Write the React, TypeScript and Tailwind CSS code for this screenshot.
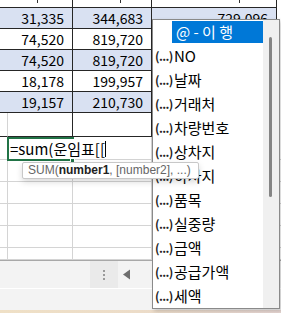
const ink = 'border-[#262626]'

const tableRows = [
  { a: '31,335', b: '344,683', c: '729,096', shaded: true },
  { a: '74,520', b: '819,720', c: '', shaded: false },
  { a: '74,520', b: '819,720', c: '', shaded: true },
  { a: '18,178', b: '199,957', c: '', shaded: false },
  { a: '19,157', b: '210,730', c: '', shaded: true },
]

const fields = ['NO', '날짜', '거래처', '차량번호', '상차지', '하차지', '품목', '실중량', '금액', '공급가액', '세액']

function TableRow({ a, b, c, shaded }: { a: string; b: string; c: string; shaded: boolean }) {
  const bg = shaded ? 'bg-[#d9e1f2]' : 'bg-white'
  return (
    <div className="grid grid-cols-[73px_79px_125px_4px] h-[21px] text-[14px] leading-[20px] text-black">
      <div className={`${bg} border-b border-r ${ink} text-right pr-[8px]`}>{a}</div>
      <div className={`${bg} border-b border-r ${ink} text-right pr-[8px]`}>{b}</div>
      <div className={`${bg} border-b border-r ${ink} text-right pr-[8px]`}>{c}</div>
      <div className="bg-white" />
    </div>
  )
}

function GridRow({ h }: { h: string }) {
  return (
    <div className={`grid grid-cols-[8px_65px_79px_125px_4px] ${h}`}>
      <div className="border-b border-r border-[#d4d4d4]" />
      <div className="border-b border-r border-[#d4d4d4]" />
      <div className="border-b border-r border-[#d4d4d4]" />
      <div className="border-b border-r border-[#d4d4d4]" />
      <div className="border-b border-[#d4d4d4]" />
    </div>
  )
}

function Tick({ mr }: { mr: string }) {
  return (
    <div className="flex justify-end items-start">
      <div className={`w-[1px] h-[3px] bg-[#333] ${mr}`} />
    </div>
  )
}

export default function App() {
  return (
    <div className="relative w-[281px] h-[313px] overflow-hidden bg-white font-['Noto_Sans_CJK_KR',sans-serif]">
      {/* sheet */}
      <div className="flex flex-col h-[260px]">
        <div className="grid grid-cols-[73px_79px_125px_4px] h-[8px]">
          <div className={`border-b border-r ${ink}`}><Tick mr="mr-[34px]" /></div>
          <div className={`border-b border-r ${ink}`}><Tick mr="mr-[30px]" /></div>
          <div className={`border-b border-r ${ink}`}><Tick mr="mr-[36px]" /></div>
          <div />
        </div>
        {tableRows.map((r, i) => (
          <TableRow key={i} {...r} />
        ))}
        <div className="grid grid-cols-[8px_65px_79px_125px_4px] h-[24px]">
          <div className={`border-b ${ink} border-r-[#d4d4d4] border-r`} />
          <div className={`border-b border-r ${ink}`} />
          <div className={`border-b border-r ${ink}`} />
          <div className={`border-b border-r ${ink}`} />
          <div />
        </div>
        {/* formula row */}
        <div className="grid grid-cols-[8px_65px_79px_125px_4px] h-[23px]">
          <div className="border-b border-r border-[#d4d4d4]" />
          <div className="border-b border-[#d4d4d4]" />
          <div className="border-b border-r border-[#d4d4d4]" />
          <div className="border-b border-r border-[#d4d4d4]" />
          <div className="border-b border-[#d4d4d4]" />
        </div>
        <GridRow h="h-[22px]" />
        <GridRow h="h-[22px]" />
        <GridRow h="h-[22px]" />
        <GridRow h="h-[22px]" />
        <GridRow h="h-[12px]" />
      </div>

      {/* sheet tabs / status */}
      <div className="h-[1px] bg-[#a8a8a8]" />
      <div className="h-[27px] bg-[#f3f3f3] flex items-stretch pl-[90px]">
        <div className="w-[28px] bg-[#eaeaea] flex flex-col items-center justify-center gap-[2px]">
          <div className="w-[2px] h-[2px] bg-[#9a9a9a]" />
          <div className="w-[2px] h-[2px] bg-[#9a9a9a]" />
          <div className="w-[2px] h-[2px] bg-[#9a9a9a]" />
        </div>
        <div className="flex items-center pl-[4px]">
          <svg width="9" height="11" viewBox="0 0 9 11">
            <path d="M8 0.5 L8 10.5 L1 5.5 Z" fill="#6e6e6e" />
          </svg>
        </div>
      </div>
      <div className="h-[1px] bg-white" />
      <div className="h-[21px] bg-[#f3f3f3]" />
      <div className="h-[3px] bg-gradient-to-r from-[#efe0c6] via-[#ecdcc8] to-[#e6d6d2]" />

      {/* active cell */}
      <div className="absolute left-[7px] top-[137px] w-[67px] h-[24px] border-2 border-[#217346] z-20" />
      <div className="absolute left-[70px] top-[158px] w-[5px] h-[5px] bg-[#217346] border border-white z-20" />

      {/* in-cell edit box */}
      <div className="absolute left-[9px] top-[139px] h-[19px] pr-[2px] bg-white z-30 whitespace-nowrap text-[15px] leading-[19px] text-black flex items-center">
        <span className="pl-[1px]">=sum(운임표[[</span>
        <span className="w-[1px] h-[16px] bg-black" />
      </div>

      {/* autocomplete list */}
      <div className="absolute left-[152px] top-[19px] w-[128px] h-[290px] bg-white border border-[#8a8a8a] shadow-[2px_2px_4px_rgba(0,0,0,0.18)] flex overflow-hidden z-30">
        <div className="w-[110px] flex flex-col">
          <div className="h-[24px] pt-[1px] pl-[19px]">
            <div className="h-[22px] bg-[#0078d7] text-white text-[15px] leading-[22px] pl-[4px] whitespace-nowrap">@ - 이 행</div>
          </div>
          {fields.map(f => (
            <div key={f} className="h-[24px] flex items-center pl-[2px] whitespace-nowrap text-black">
              <span className="w-[19px] text-[12px] font-semibold tracking-[-0.6px] text-[#222]">(...)</span>
              <span className="text-[15px] leading-[22px]">{f}</span>
            </div>
          ))}
        </div>
        <div className="flex-1 bg-[#f0f0f0] pl-[6px] pt-[17px]">
          <div className="w-[3px] h-[160px] rounded-full bg-[#858585]" />
        </div>
      </div>

      {/* function tooltip */}
      <div className="absolute left-[22px] top-[162px] w-[177px] h-[17px] bg-white border border-[#c8c8c8] rounded-[2px] shadow-[0_3px_6px_rgba(0,0,0,0.15)] pl-[5px] text-[12px] leading-[15px] text-[#666] whitespace-nowrap font-['Liberation_Sans',sans-serif] z-40">
        SUM(<b className="text-[#222]">number1</b>, [number2], ...)
      </div>
    </div>
  )
}
